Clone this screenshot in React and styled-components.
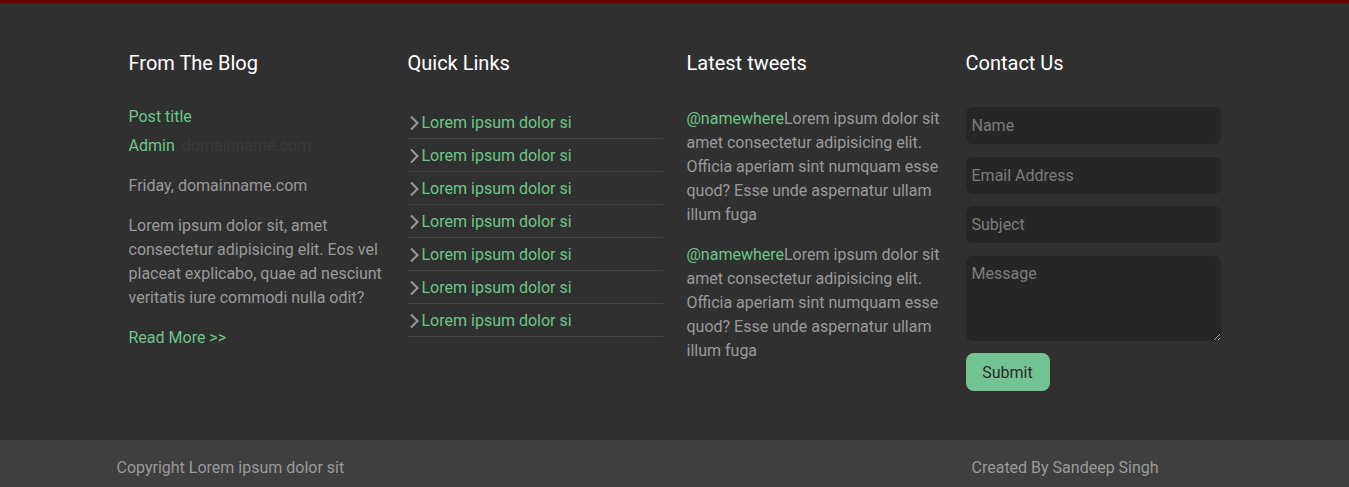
import styled, { createGlobalStyle } from 'styled-components'

const GlobalStyle = createGlobalStyle`
  * { box-sizing: border-box; }
  body {
    margin: 0;
    background: #303030;
    font-family: Roboto, "Liberation Sans", sans-serif;
  }
`;

const links = Array.from({ length: 7 }, () => 'Lorem ipsum dolor si')
const tweet = 'Lorem ipsum dolor sit amet consectetur adipisicing elit. Officia aperiam sint numquam esse quod? Esse unde aspernatur ullam illum fuga'

const Chevron = () => (
  <svg width="13" height="16" viewBox="0 0 13 16" fill="none">
    <path d="M3 1.5 L9.5 8 L3 14.5" stroke="#9a9a9a" strokeWidth="2" />
  </svg>
)

const App = () => {
  return (
    <>
      <GlobalStyle />
      <Footer>
        <Container>
          <Grid>
            <Col>
              <Title>From The Blog</Title>
              <PostTitle href="#">Post title</PostTitle>
              <Meta><Green>Admin</Green>, domainname.com</Meta>
              <Text>Friday, domainname.com</Text>
              <Text $last>Lorem ipsum dolor sit, amet consectetur adipisicing elit. Eos vel placeat explicabo, quae ad nesciunt veritatis iure commodi nulla odit?</Text>
              <Green as="a" href="#">Read More &gt;&gt;</Green>
            </Col>
            <Col>
              <Title>Quick Links</Title>
              <LinkList>
                {links.map((l, i) => (
                  <LinkItem key={i}>
                    <Chevron />
                    <Green as="a" href="#">{l}</Green>
                  </LinkItem>
                ))}
              </LinkList>
            </Col>
            <Col>
              <Title>Latest tweets</Title>
              <Tweet><Green>@namewhere</Green>{tweet}</Tweet>
              <Tweet><Green>@namewhere</Green>{tweet}</Tweet>
            </Col>
            <Col>
              <Title>Contact Us</Title>
              <Form onSubmit={e => e.preventDefault()}>
                <Input placeholder="Name" />
                <Input placeholder="Email Address" />
                <Input placeholder="Subject" />
                <Area placeholder="Message" />
                <Button type="submit">Submit</Button>
              </Form>
            </Col>
          </Grid>
        </Container>
      </Footer>
      <Bottom>
        <BottomInner>
          <Small>Copyright Lorem ipsum dolor sit</Small>
          <Small>Created By Sandeep Singh</Small>
        </BottomInner>
      </Bottom>
    </>
  )
}
export default App

const Footer = styled.footer`
  border-top: 3px solid #6e0000;
  background: #303030;
  padding: 48px 0 49px;
`;
const Container = styled.div`
  width: 1116px;
  margin: 0 auto;
`;
const Grid = styled.div`
  display: grid;
  grid-template-columns: repeat(4, 1fr);
`;
const Col = styled.div`
  padding: 0 12px;
`;
const Title = styled.h4`
  margin: 0 0 30px;
  color: #ffffff;
  font-size: 20px;
  font-weight: 400;
  line-height: 24px;
`;
const Green = styled.span`
  color: #6cc788;
  text-decoration: none;
`;
const PostTitle = styled.a`
  display: block;
  color: #6cc788;
  text-decoration: none;
  font-size: 16px;
  line-height: 24px;
  margin-bottom: 5px;
`;
const Meta = styled.p`
  margin: 0 0 16px;
  color: #3a3a3a;
  font-size: 16px;
  line-height: 24px;
`;
const Text = styled.p`
  margin: 0 0 ${p => (p.$last ? '18px' : '16px')};
  color: #9a9a9a;
  font-size: 16px;
  line-height: 24px;
`;
const LinkList = styled.ul`
  list-style: none;
  margin: 0;
  padding: 0;
  padding-top: 1px;
  font-size: 16px;
`;
const LinkItem = styled.li`
  display: flex;
  align-items: center;
  gap: 1px;
  height: 33px;
  padding-top: 1px;
  border-bottom: 1px solid #434343;
  line-height: 24px;
`;
const Tweet = styled.p`
  margin: 0 0 16px;
  padding-top: 2px;
  color: #9a9a9a;
  font-size: 16px;
  line-height: 24px;
  & + & { padding-top: 0; }
`;
const Form = styled.form`
  display: flex;
  flex-direction: column;
  align-items: flex-start;
  gap: 12.5px;
  padding-top: 2px;
`;
const Input = styled.input`
  width: 100%;
  height: 37px;
  border: none;
  border-radius: 7px;
  background: #262626;
  color: #ccc;
  padding: 0 6px;
  font-family: Roboto, "Liberation Sans", sans-serif;
  font-size: 16px;
  outline: none;
  &::placeholder { color: #7d7d7d; }
`;
const Area = styled.textarea`
  width: 100%;
  height: 85px;
  border: none;
  border-radius: 7px;
  background: #262626;
  color: #ccc;
  padding: 8px 6px;
  font-family: Roboto, "Liberation Sans", sans-serif;
  font-size: 16px;
  outline: none;
  &::placeholder { color: #7d7d7d; }
`;
const Button = styled.button`
  width: 84px;
  height: 38px;
  border: none;
  border-radius: 8px;
  background: #74c493;
  color: #2a2a2a;
  font-family: Roboto, "Liberation Sans", sans-serif;
  font-size: 16px;
  cursor: pointer;
`;
const Bottom = styled.div`
  background: #3f3f3f;
  height: 47px;
`;
const BottomInner = styled.div`
  width: 1116px;
  margin: 0 auto;
  display: grid;
  grid-template-columns: 855px 1fr;
  align-items: center;
  height: 100%;
  padding-top: 8px;
`;
const Small = styled.p`
  margin: 0;
  color: #9a9a9a;
  font-size: 16px;
  line-height: 24px;
`;
